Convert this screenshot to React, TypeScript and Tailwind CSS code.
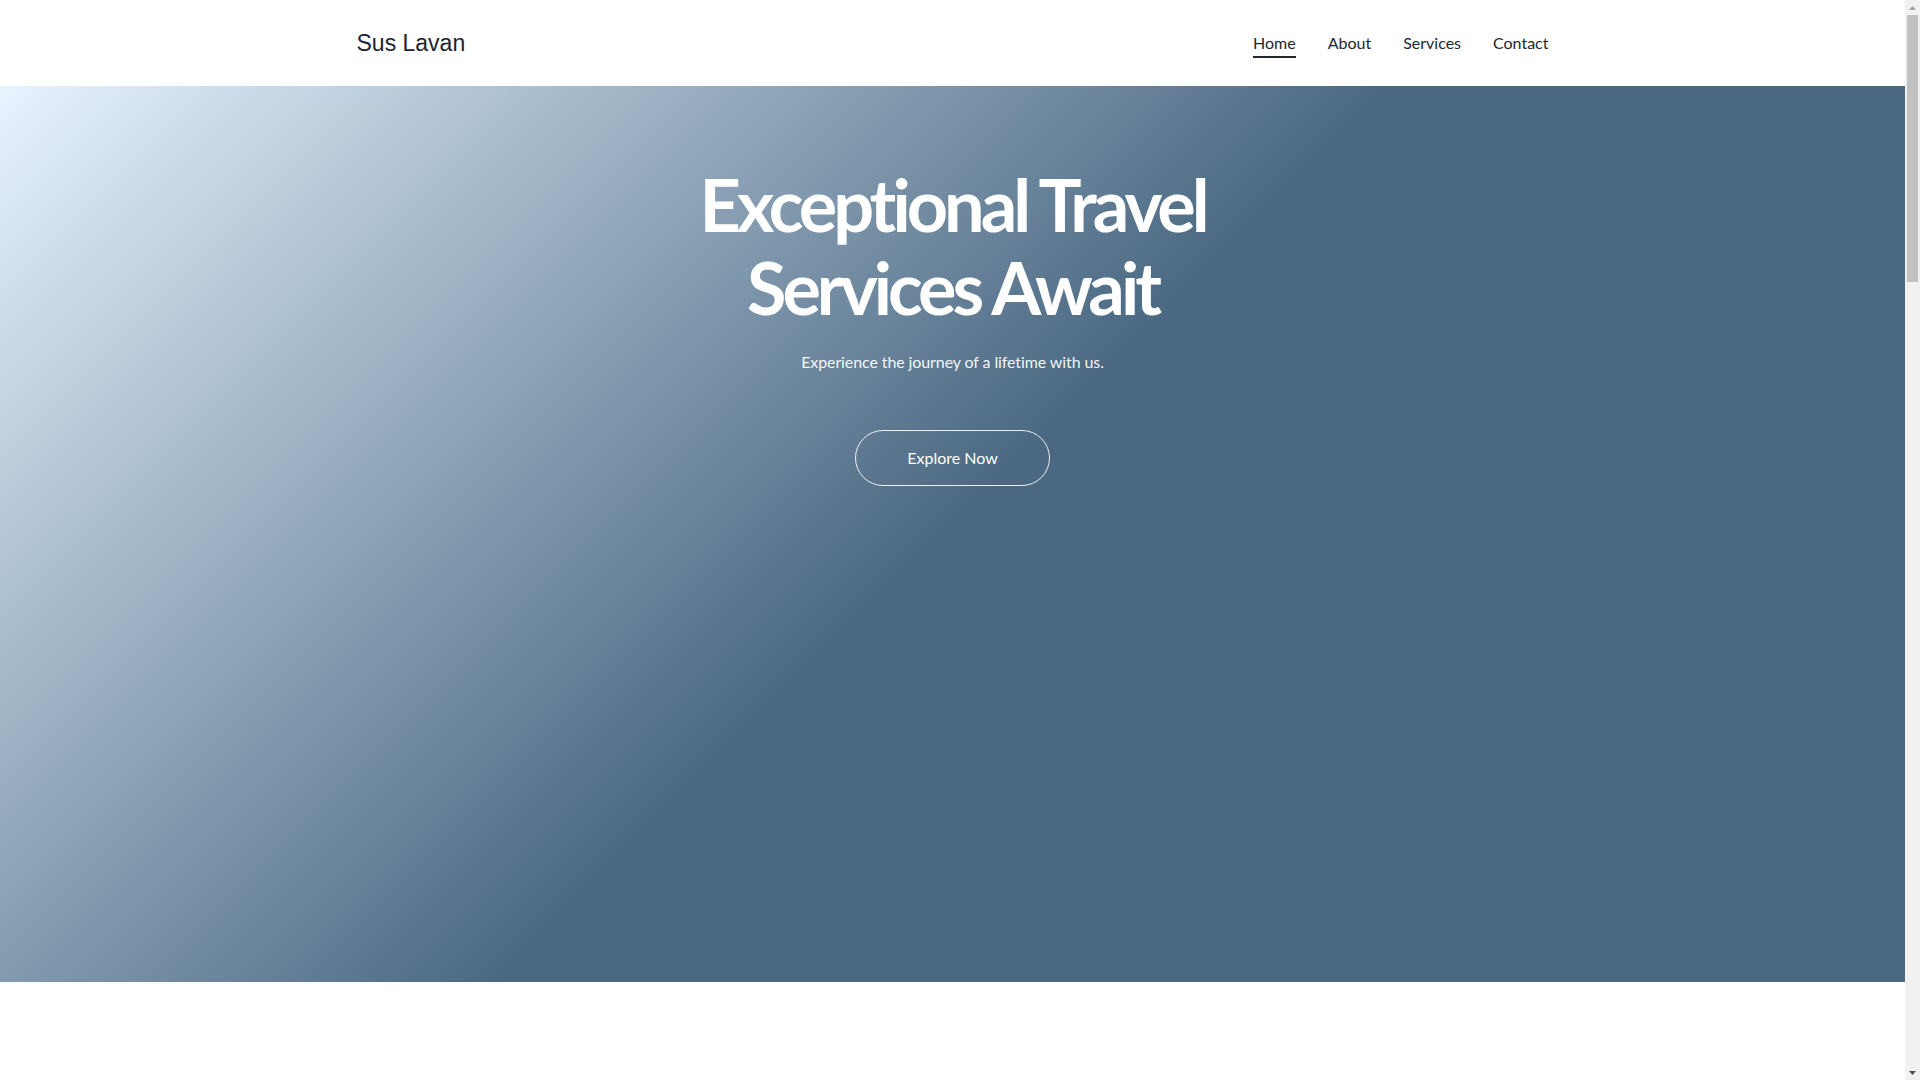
import { useState } from "react";

const links = ["Home", "About", "Services", "Contact"];

function Header() {
  const [active, setActive] = useState("Home");

  return (
    <header className="h-[86px] bg-white">
      <div className="mx-auto flex h-full w-[1192px] items-center justify-between">
        <a
          href="#"
          className="font-['Liberation_Sans',Arial,sans-serif] text-[23px] leading-8 text-[#1d2330]"
        >
          Sus Lavan
        </a>
        <nav className="flex items-center gap-8 font-['Lato',sans-serif] text-base text-[#222730]">
          {links.map((l) => (
            <a
              key={l}
              href={`#${l.toLowerCase()}`}
              onClick={() => setActive(l)}
              className="relative"
            >
              {l}
              {active === l && (
                <span className="absolute left-0 top-full mt-px h-[2px] w-full bg-[#222730]" />
              )}
            </a>
          ))}
        </nav>
      </div>
    </header>
  );
}

function Hero() {
  return (
    <section className="h-[896px] bg-[linear-gradient(135deg,#e8f4ff_0%,#4a6882_50%,#4a6882_100%)] pt-[77px] text-center font-['Lato',sans-serif] text-white">
      <h1 className="mx-auto max-w-[560px] text-[72px] font-bold leading-[1.15] tracking-[-4px]">
        Exceptional Travel Services Await
      </h1>
      <p className="mt-[21px] text-base tracking-[-0.1px] text-white/95">
        Experience the journey of a lifetime with us.
      </p>
      <a
        href="#services"
        className="mt-[56px] inline-block rounded-full border border-white/90 px-[51px] py-[15px] text-base"
      >
        Explore Now
      </a>
    </section>
  );
}

function Scrollbar() {
  return (
    <div className="flex w-[15px] shrink-0 flex-col bg-[#f1f1f1]">
      <div className="flex h-[15px] items-center justify-center">
        <svg width="7" height="4" viewBox="0 0 7 4">
          <polygon points="3.5,0 7,4 0,4" fill="#a3a3a3" />
        </svg>
      </div>
      <div className="mx-[2px] h-[267px] bg-[#c1c1c1]" />
      <div className="flex-1" />
      <div className="flex h-[15px] items-center justify-center">
        <svg width="7" height="4" viewBox="0 0 7 4">
          <polygon points="0,0 7,0 3.5,4" fill="#505050" />
        </svg>
      </div>
    </div>
  );
}

export default function App() {
  return (
    <div className="flex h-screen bg-white">
      <main className="h-full flex-1 overflow-y-auto [scrollbar-width:none]">
        <Header />
        <Hero />
        <section id="about" className="h-[1090px]" />
        <section id="services" className="h-[1090px]" />
        <section id="contact" className="h-[1088px]" />
      </main>
      <Scrollbar />
    </div>
  );
}
